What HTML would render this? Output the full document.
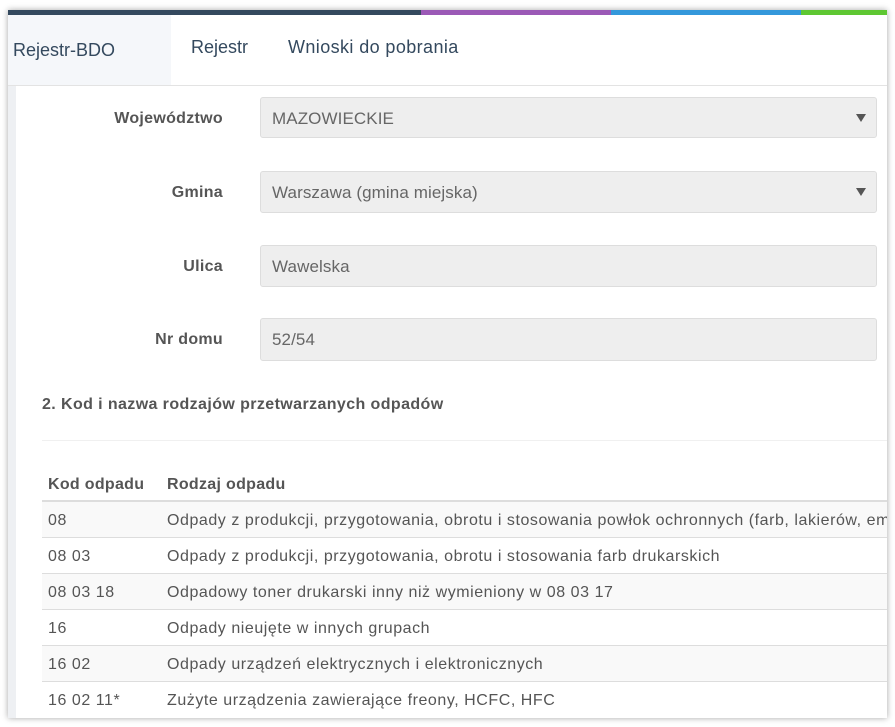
<!DOCTYPE html>
<html><head><meta charset="utf-8"><style>
body{margin:0;width:895px;height:727px;background:#fff;font-family:"Liberation Sans",sans-serif;color:#555;position:relative;overflow:hidden}
.frame{position:absolute;left:8px;top:10px;width:879px;height:708px;background:#fff;box-shadow:0 0 6px rgba(0,0,0,.35);overflow:hidden}
.bar{position:absolute;top:0;height:5px}
.a{position:absolute;white-space:nowrap}
.lbl{position:absolute;right:664px;font-weight:bold;font-size:16px;color:#555;letter-spacing:.3px}
.inp{position:absolute;left:252px;width:617px;height:40px;background:#eee;border:1px solid #ddd;border-radius:3px;box-sizing:border-box;font-size:17px;color:#666;padding:11px 11px;letter-spacing:.1px}
.tri{position:absolute;right:10px;top:16px;width:0;height:0;border-left:5px solid transparent;border-right:5px solid transparent;border-top:8px solid #555}
.row{position:absolute;left:34px;width:860px;height:35px;border-top:1px solid #ddd;font-size:16px;color:#555;letter-spacing:.55px}
.row span{position:absolute;top:10px;white-space:nowrap}
.c1{left:6px}.c2{left:125px}
.th{position:absolute;top:466px;font-weight:bold;font-size:16px;letter-spacing:.3px;white-space:nowrap}
</style></head><body>
<div class="frame">
<div class="bar" style="left:0;width:413px;background:#34495e"></div>
<div class="bar" style="left:413px;width:190px;background:#9b59b6"></div>
<div class="bar" style="left:603px;width:190px;background:#3498db"></div>
<div class="bar" style="left:793px;width:90px;background:#5ec732"></div>
<div style="position:absolute;left:0;top:5px;width:163px;height:70px;background:#f5f7fa"></div>
<div class="a" style="left:5px;top:30px;font-size:18px;color:#34495e">Rejestr-BDO</div>
<div class="a" style="left:183px;top:27px;font-size:18px;color:#34495e">Rejestr</div>
<div class="a" style="left:280px;top:27px;font-size:18px;color:#34495e;letter-spacing:.4px">Wnioski do pobrania</div>
<div style="position:absolute;left:0;top:75px;width:879px;height:1px;background:#e3e3e3"></div>
<div style="position:absolute;left:0;top:76px;width:8px;height:640px;background:#eef0f3"></div>

<div class="lbl" style="top:100px">Województwo</div>
<div class="inp" style="top:87px;height:41px">MAZOWIECKIE<div class="tri"></div></div>
<div class="lbl" style="top:174px">Gmina</div>
<div class="inp" style="top:161px;height:42px">Warszawa (gmina miejska)<div class="tri"></div></div>
<div class="lbl" style="top:248px">Ulica</div>
<div class="inp" style="top:235px;height:42px">Wawelska</div>
<div class="lbl" style="top:321px">Nr domu</div>
<div class="inp" style="top:308px;height:43px">52/54</div>

<div class="a" style="left:34px;top:386px;font-weight:bold;font-size:16px;letter-spacing:.4px">2. Kod i nazwa rodzajów przetwarzanych odpadów</div>
<div style="position:absolute;left:34px;top:430px;width:845px;height:1px;background:#f0f0f0"></div>
<div class="th" style="left:40px">Kod odpadu</div>
<div class="th" style="left:159px">Rodzaj odpadu</div>
<div style="position:absolute;left:34px;top:490px;width:845px;height:1px;background:#ddd"></div>
<div class="row" style="top:491px;background:#f9f9f9"><span class="c1">08</span><span class="c2">Odpady z produkcji, przygotowania, obrotu i stosowania powłok ochronnych (farb, lakierów, emali ceramicznych)</span></div>
<div class="row" style="top:527px"><span class="c1">08 03</span><span class="c2">Odpady z produkcji, przygotowania, obrotu i stosowania farb drukarskich</span></div>
<div class="row" style="top:563px;background:#f9f9f9"><span class="c1">08 03 18</span><span class="c2">Odpadowy toner drukarski inny niż wymieniony w 08 03 17</span></div>
<div class="row" style="top:599px"><span class="c1">16</span><span class="c2">Odpady nieujęte w innych grupach</span></div>
<div class="row" style="top:635px;background:#f9f9f9"><span class="c1">16 02</span><span class="c2">Odpady urządzeń elektrycznych i elektronicznych</span></div>
<div class="row" style="top:671px"><span class="c1">16 02 11*</span><span class="c2">Zużyte urządzenia zawierające freony, HCFC, HFC</span></div>
</div>
</body></html>
